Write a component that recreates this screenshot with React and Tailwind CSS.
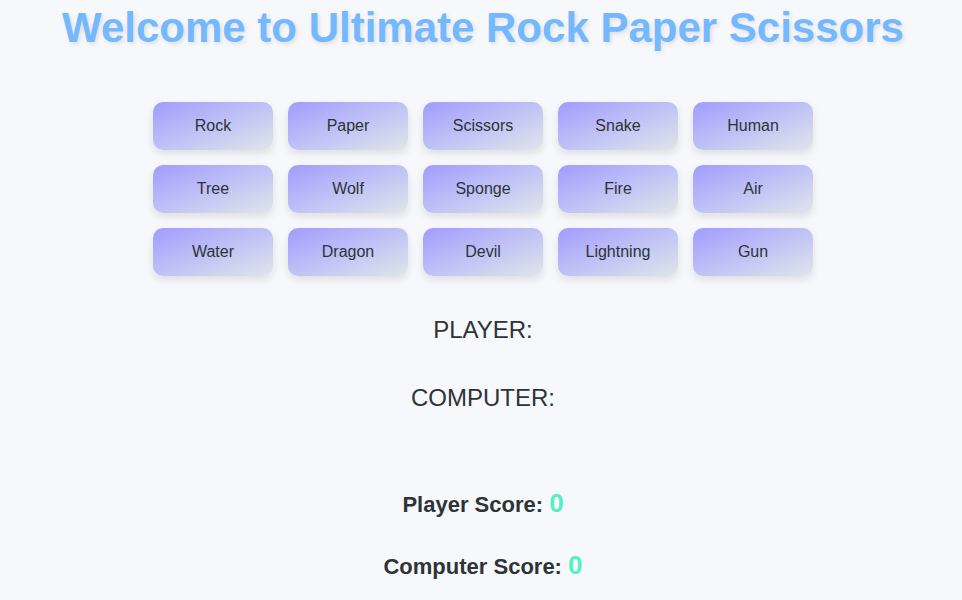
import { useState } from "react";

const choices = [
  "Rock", "Paper", "Scissors", "Snake", "Human",
  "Tree", "Wolf", "Sponge", "Fire", "Air",
  "Water", "Dragon", "Devil", "Lightning", "Gun"
];

export default function App() {
  const [player, setPlayer] = useState("");
  const [computer, setComputer] = useState("");

  return (
    <div className="min-h-screen bg-[#f7f8fc] pl-[4px] text-center text-[#2d3436]" style={{ fontFamily: '"Liberation Sans", Arial, sans-serif' }}>
      <h1 className="pt-[4px] text-[42px] leading-[48px] font-bold text-[#74b9ff] [text-shadow:2px_2px_4px_rgba(0,0,0,0.1)]">
        Welcome to Ultimate Rock Paper Scissors
      </h1>

      <div className="mx-auto mt-[50px] grid w-fit grid-cols-5 gap-[15px]">
        {choices.map((choice) => (
          <button
            key={choice}
            type="button"
            onClick={() => {
              setPlayer(choice);
              setComputer(choices[Math.floor(Math.random() * choices.length)]);
            }}
            className="h-[48px] w-[120px] rounded-[10px] bg-gradient-to-br from-[#a29bfe] to-[#dfe6e9] text-[16px] text-[#2d3436] shadow-[0_4px_8px_rgba(0,0,0,0.1)]"
          >
            {choice}
          </button>
        ))}
      </div>

      <div className="mt-[40px] text-[24px] leading-[28px]">PLAYER: {player}</div>
      <div className="mt-[40px] text-[24px] leading-[28px]">COMPUTER: {computer}</div>

      <div className="mt-[76px] text-[22px] font-bold leading-[30px]">
        Player Score: <span className="text-[26px] text-[#55efc4]">0</span>
      </div>
      <div className="mt-[30px] text-[22px] font-bold leading-[30px]">
        Computer Score: <span className="text-[26px] text-[#55efc4]">0</span>
      </div>
    </div>
  );
}
